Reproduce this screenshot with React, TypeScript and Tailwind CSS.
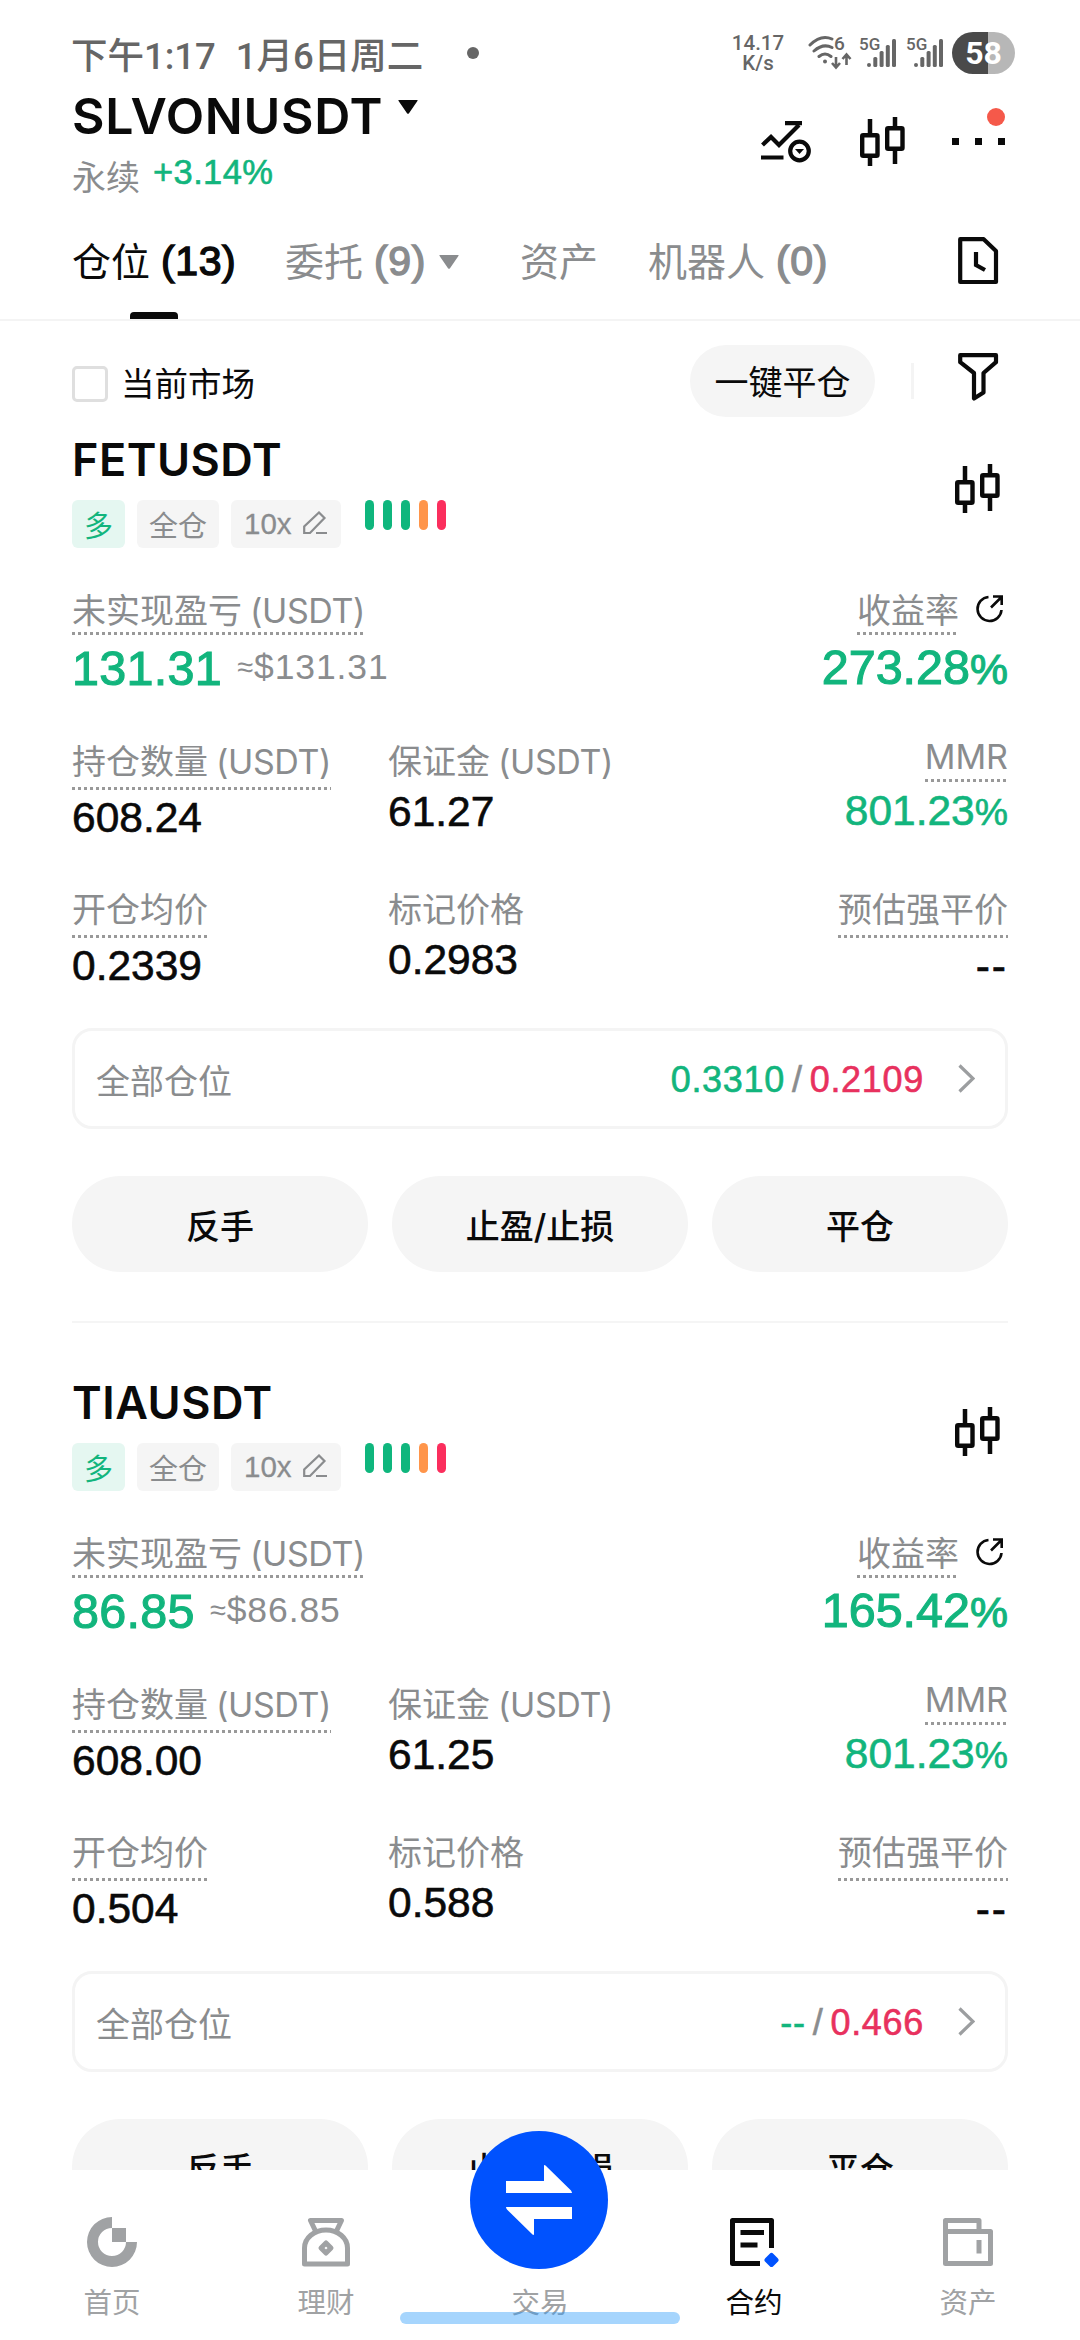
import React from "react";
import clsx from "clsx";

// figures sit between regular and bold, the thin stroke gives the extra weight
const NUM = "font-['Liberation_Sans','Noto_Sans_CJK_SC',sans-serif] [-webkit-text-stroke:0.6px_currentColor]";

const CandleIcon = () => (
	<svg width="45" height="50" viewBox="0 0 45 50" fill="none" stroke="#0a0a0a">
		<path d="M10 2v15M10 40v9M35 0v11M35 33v14" strokeWidth="4.5" />
		<rect x="2.2" y="18.2" width="15.3" height="20.6" rx="1" strokeWidth="4.4" />
		<rect x="27.2" y="11.2" width="15.3" height="20.6" rx="1" strokeWidth="4.4" />
	</svg>
);

const Caret = ({ className }: { className?: string }) => (
	<svg width="20" height="14" viewBox="0 0 20 14" fill="currentColor" className={className}>
		<path d="M1 0h18q1.200 0 .4 1L11 13.300q-1 1-2 0L.6 1Q-.2 0 1 0z" />
	</svg>
);

const Signal = () => (
	<div className="relative w-[38px] h-[36px]">
		<span className="absolute left-0 top-0 text-[17px] leading-[18px] font-medium">5G</span>
		<svg width="30" height="30" viewBox="0 0 30 30" fill="#666" className="absolute left-[8px] top-[4px]">
			<rect x="0" y="24" width="4" height="4" rx="2" />
			<rect x="6.300" y="18" width="4" height="10" rx="1.500" />
			<rect x="12.600" y="12" width="4" height="16" rx="1.500" />
			<rect x="18.800" y="6" width="4" height="22" rx="1.500" />
			<rect x="25" y="0" width="4" height="28" rx="1.500" />
		</svg>
	</div>
);

const StatusBar = () => (
	<div className="flex items-center h-[86px] pt-5 pl-[71px] pr-[65px] text-[#666] font-['Roboto','Noto_Sans_CJK_SC',sans-serif]">
		<span className="mt-[8px] text-[36.500px] leading-[42px] font-medium">下午1:17</span>
		<span className="mt-[8px] ml-[20px] text-[36.500px] leading-[42px] font-medium">1月6日周二</span>
		<span className="ml-[44px] size-3 rounded-full bg-[#666]" />
		<div className="flex items-center ml-auto">
			<div className="w-[54px] text-center text-[20.500px] leading-[20px] font-medium">
				<div>14.17</div>
				<div>K/s</div>
			</div>
			<div className="relative w-[44px] h-[36px] ml-[23px]">
				<svg width="44" height="36" viewBox="0 0 44 36" fill="none" stroke="#666" strokeWidth="3" strokeLinecap="round">
					<path d="M2 10Q13-1 24 4M6 16Q15 8 24 12.500M11 21.500q6-5 12 0" />
					<circle cx="17" cy="26.500" r="2" fill="#666" stroke="none" />
					<path d="M28 22v10m-4-4l4 4.500 4-4.500M38.500 30V20m-4 4l4-4.500 4 4.500" strokeWidth="2.600" strokeLinecap="butt" />
				</svg>
				<span className="absolute left-[26px] top-[-1px] text-[19px] leading-[20px] font-medium">6</span>
			</div>
			<div className="flex gap-[9px] ml-[7px]">
				<Signal />
				<Signal />
			</div>
			<div className="flex items-center justify-center w-[63px] h-[42px] ml-[8px] rounded-full bg-[linear-gradient(90deg,#4a4a4a_36px,#b7b7b7_36px)] text-white text-[32px] leading-[42px] font-bold">
				58
			</div>
		</div>
	</div>
);

const Header = () => (
	<div className="flex justify-between h-[122px] pl-[72px] pr-[75px]">
		<div>
			<div className="flex items-start">
				<h1 className="text-[50px] leading-[60px] font-semibold tracking-[0.700px]">SLVONUSDT</h1>
				<Caret className="mt-[14px] ml-[15px]" />
			</div>
			<div className="flex items-center h-[62px] text-[34px]">
				<span className="text-[#8a8c8e]">永续</span>
				<span className={clsx(NUM, "ml-[13px] mb-[10px] text-[34.500px] leading-[40px] tracking-[0.400px] text-[#12b57d]")}>+3.14%</span>
			</div>
		</div>
		<div className="flex items-center h-[111px]">
			<svg width="50" height="42" viewBox="0 0 50 42" fill="none" stroke="#0a0a0a" strokeWidth="4.200" className="mr-[49px]">
				<path d="M1.500 24L10 16l8 8L38 4M24 2.200h17M0 36.500h22.500" />
				<circle cx="38.500" cy="30" r="9.300" />
				<path d="M34 28h9l-4.500 5z" fill="#0a0a0a" stroke="none" />
			</svg>
			<CandleIcon />
			<div className="relative flex items-center justify-between w-[53px] ml-[47px]">
				<span className="size-[7px] bg-[#0a0a0a]" />
				<span className="size-[7px] bg-[#0a0a0a]" />
				<span className="size-[7px] bg-[#0a0a0a]" />
				<span className="absolute right-0 -top-[30px] size-[18px] rounded-full bg-[#f5594a]" />
			</div>
		</div>
	</div>
);

type TabProps = {
	label: string;
	count?: string;
	active?: boolean;
	caret?: boolean;
	className?: string;
};

const Tab = ({ label, count, active, caret, className }: TabProps) => (
	<div className={clsx("flex text-[41px] leading-[107px]", active ? "text-[#0a0a0a]" : "text-[#8a8c8e]", className)}>
		<div className="relative flex">
			<span className="text-[39px]">{label}</span>
			{count && (
				<span className="ml-[11px] tracking-[0.600px] font-['Liberation_Sans',sans-serif] [-webkit-text-stroke:1.400px_currentColor]">{count}</span>
			)}
			{active && (
				<span className="absolute bottom-0 left-1/2 -translate-x-1/2 w-12 h-[7px] rounded-t bg-[#0a0a0a]" />
			)}
		</div>
		{caret && <Caret className="mt-[47px] ml-[13px]" />}
	</div>
);

const Tabs = () => (
	<div className="flex h-[113px] pl-[72px] border-b-2 border-[#f4f4f4]">
		<Tab label="仓位" count="(13)" active className="w-[213px]" />
		<Tab label="委托" count="(9)" caret className="w-[235px]" />
		<Tab label="资产" className="w-[128px]" />
		<Tab label="机器人" count="(0)" />
		<svg width="41" height="48" viewBox="0 0 41 48" fill="none" stroke="#0a0a0a" strokeWidth="4.200" className="ml-auto mr-[81px] mt-[29px]">
			<path d="M2.200 2.200h23.500L38 14v31H2.200z" strokeLinejoin="round" />
			<path d="M18 15v13l9 5" />
		</svg>
	</div>
);

const FilterRow = () => (
	<div className="flex items-center h-[120px] pl-[72px] pr-[81px]">
		<span className="mt-[6px] size-9 rounded-[5px] border-[3px] border-[#dfdfdf]" />
		<span className="mt-[6px] ml-[13px] text-[33.500px] leading-[40px]">当前市场</span>
		<button className="ml-auto w-[185px] h-[72px] rounded-full bg-[#f5f5f5] text-[34px] leading-[76px]">一键平仓</button>
		<span className="ml-[36px] w-[3px] h-[36px] bg-[#f4f4f4]" />
		<svg width="41" height="48" viewBox="0 0 41 48" fill="none" stroke="#0a0a0a" strokeWidth="4.200" strokeLinejoin="round" className="ml-[44px] mb-[8px]">
			<path d="M2.200 2.200H38v7L25.500 20v19.500l-9.500 6V20L2.200 9.200z" />
		</svg>
	</div>
);

const Dotted = () => (
	<div className="h-[3px] bg-[repeating-linear-gradient(90deg,#999_0_3px,transparent_3px_6px)]" />
);

const Percent = ({ value }: { value: string }) => (
	<>
		{value}
		<span className="text-[0.880em]">%</span>
	</>
);

const Label = ({ text, unit }: { text: string; unit?: string }) => (
	<span className="flex translate-y-px text-[34px] text-[#8a8c8e]">
		{text}
		{unit && <span className="ml-[8px] tracking-[-0.400px]">{unit}</span>}
	</span>
);

type PositionData = {
	symbol: string;
	pnl: string;
	roi: string;
	size: string;
	margin: string;
	mmr: string;
	entry: string;
	mark: string;
	tp: string;
	sl: string;
};

const Position = ({ data }: { data: PositionData }) => (
	<div className="px-[72px]">
		<div className="flex justify-between h-[107px]">
			<div>
				<h2 className="text-[45px] leading-[38px] font-semibold tracking-[0.500px]">{data.symbol}</h2>
				<div className="flex mt-[21px] text-[29px] leading-[53px] text-[#8a8c8e]">
					<span className="w-[53px] h-12 rounded-[6px] text-center bg-[#e5f7f1] text-[#12b57d]">多</span>
					<span className="w-[82px] h-12 ml-3 rounded-[6px] text-center bg-[#f5f5f5]">全仓</span>
					<div className="flex w-[110px] h-12 ml-3 pl-[13px] rounded-[6px] bg-[#f5f5f5]">
						<span className="w-[49px] text-[29.500px] leading-[48px] font-['Liberation_Sans',sans-serif] [-webkit-text-stroke:0.3px_currentColor]">10x</span>
						<svg width="25" height="24" viewBox="0 0 25 24" fill="none" stroke="#8a8c8e" strokeWidth="2.200" className="mt-[11px] ml-[10px]">
							<path d="M1.200 22v-6.500L16 1.500l5.500 5.500L7 22zM13 22h11" />
						</svg>
					</div>
					<div className="flex gap-[9px] ml-6">
						<span className="w-[9px] h-[30px] rounded-full bg-[#0fb67d]" />
						<span className="w-[9px] h-[30px] rounded-full bg-[#0fb67d]" />
						<span className="w-[9px] h-[30px] rounded-full bg-[#0fb67d]" />
						<span className="w-[9px] h-[30px] rounded-full bg-[#ff954a]" />
						<span className="w-[9px] h-[30px] rounded-full bg-[#fb2e5d]" />
					</div>
				</div>
			</div>
			<div className="mt-[23px] mr-2">
				<CandleIcon />
			</div>
		</div>

		{/* pnl */}
		<div className="flex justify-between mt-10">
			<div className="flex flex-col items-start">
				<div className="leading-[44px]">
					<Label text="未实现盈亏" unit="(USDT)" />
					<Dotted />
				</div>
				<div className={clsx(NUM, "flex items-center h-[66px] text-[#12b57d]")}>
					<span className="text-[48.500px] leading-[64px] tracking-[0.300px] [-webkit-text-stroke:1.100px_currentColor]">{data.pnl}</span>
					<span className="flex items-center ml-[15px] text-[35.500px] text-[#8a8c8e] tracking-[0.900px] [-webkit-text-stroke:0]">
						<span className="text-[29px]">≈</span>${data.pnl}
					</span>
				</div>
			</div>
			<div className="flex flex-col items-end">
				<div className="flex items-start leading-[44px]">
					<div>
						<Label text="收益率" />
						<Dotted />
					</div>
					<svg width="27" height="28" viewBox="0 0 27 28" fill="none" stroke="#0a0a0a" strokeWidth="2.600" className="mt-[7px] ml-[17px] mr-[5px]">
						<path d="M12.500 2A12 12 0 1 0 25.500 15M15 12.500L25 2.500M17 1.500h8.700V10" />
					</svg>
				</div>
				<div className={clsx(NUM, "h-[66px] text-[48.500px] leading-[64px] text-[#12b57d] [-webkit-text-stroke:1.100px_currentColor]")}>
					<Percent value={data.roi} />
				</div>
			</div>
		</div>

		<div className="grid grid-cols-[316px_1fr_auto] grid-rows-[148px_145px] mt-[34px] text-[42.500px] leading-[52px]">
			<div className="flex flex-col items-start">
				<div>
					<Label text="持仓数量" unit="(USDT)" />
					<Dotted />
				</div>
				<span className={clsx(NUM, "leading-[56px]")}>{data.size}</span>
			</div>
			<div>
				<Label text="保证金" unit="(USDT)" />
				<div className={clsx(NUM, "leading-[50px]")}>{data.margin}</div>
			</div>
			<div className="flex flex-col items-end">
				<div className="leading-[42px]">
					<Label text="MMR" />
					<div className="mt-[2px]">
						<Dotted />
					</div>
				</div>
				<span className={clsx(NUM, "leading-[57px] text-[#12b57d]")}>
					<Percent value={data.mmr} />
				</span>
			</div>
			<div className="flex flex-col items-start">
				<div>
					<Label text="开仓均价" />
					<Dotted />
				</div>
				<span className={clsx(NUM, "leading-[56px]")}>{data.entry}</span>
			</div>
			<div>
				<Label text="标记价格" />
				<div className={clsx(NUM, "leading-[50px]")}>{data.mark}</div>
			</div>
			<div className="flex flex-col items-end">
				<div>
					<Label text="预估强平价" />
					<Dotted />
				</div>
				<span className={clsx(NUM, "leading-[57px] tracking-[2px]")}>--</span>
			</div>
		</div>

		<div className="flex items-center h-[101px] pl-[21px] pr-[30px] rounded-[20px] border-[3px] border-[#f4f4f4]">
			<span className="mt-[7px] text-[34px] leading-[40px] text-[#8a8c8e]">全部仓位</span>
			<div className={clsx(NUM, "flex gap-[7px] ml-auto mt-[2px] text-[36px] leading-[40px] tracking-[0.700px]")}>
				<span className="text-[#12b57d]">{data.tp}</span>
				<span className="text-[#8a8c8e]">/</span>
				<span className="text-[#e8315e]">{data.sl}</span>
			</div>
			<svg width="17" height="29" viewBox="0 0 17 29" fill="none" stroke="#9c9ea0" strokeWidth="3.200" className="ml-[34px]">
				<path d="M1.500 1.500L15 14.500 1.500 27.500" />
			</svg>
		</div>

		<div className="grid grid-cols-3 gap-6 mt-[47px] text-[34px] leading-[102px] font-medium">
			<button className="h-24 rounded-full bg-[#f5f5f5]">反手</button>
			<button className="h-24 rounded-full bg-[#f5f5f5]">止盈/止损</button>
			<button className="h-24 rounded-full bg-[#f5f5f5]">平仓</button>
		</div>
		<div className="h-[2px] mt-[49px] mb-[61px] bg-[#f5f5f5]" />
	</div>
);

const NavItem = ({ label, active, children }: { label: string; active?: boolean; children?: React.ReactNode }) => (
	<div className={clsx("flex flex-1 flex-col items-center pt-[47px] text-[28.500px] leading-[36px]", active ? "text-[#0a0a0a]" : "text-[#a0a2a4]")}>
		<div className="h-[50px]">{children}</div>
		<span className="mt-[18px]">{label}</span>
	</div>
);

const BottomNav = () => (
	<div className="relative flex h-[170px] px-[5px] bg-white">
		<NavItem label="首页">
			<svg width="50" height="50" viewBox="0 0 50 50" fill="#a0a2a4">
				<path d="M25 0A25 25 0 1 0 50 25H39A14 14 0 1 1 25 11z" />
				<path d="M25 11h14v14H25z" />
			</svg>
		</NavItem>
		<NavItem label="理财">
			<svg width="48" height="50" viewBox="0 0 48 50" fill="none" stroke="#a0a2a4" strokeWidth="5" strokeLinejoin="round">
				<path d="M2.500 47V31a21.500 18 0 0 1 43 0V47z" />
				<path d="M14 15L8.500 3.500h31L34 15" />
				<path d="M24 26l5 5-5 5-5-5z" />
			</svg>
		</NavItem>
		<NavItem label="交易" />
		<NavItem label="合约" active>
			<svg width="50" height="50" viewBox="0 0 50 50" fill="none" stroke="#0a0a0a" strokeWidth="5">
				<path d="M42.500 31V3.500h-39v43H31" strokeLinejoin="round" />
				<path d="M11.500 15.500h23.500M11.500 28h17" />
				<path d="M42.500 38.500l4.500 4.500-4.500 4.500-4.500-4.500z" fill="#0052fe" stroke="#0052fe" strokeLinejoin="round" />
			</svg>
		</NavItem>
		<NavItem label="资产">
			<svg width="50" height="50" viewBox="0 0 50 50" fill="none" stroke="#a0a2a4" strokeWidth="5" strokeLinejoin="round">
				<path d="M2.500 14.500H47.500v32h-45V3.500H36v11" />
				<path d="M36 23v13.500" />
			</svg>
		</NavItem>
		<div className="absolute left-[470px] -top-[39px] flex items-center justify-center size-[138px] rounded-full bg-[#0052fe]">
			<svg width="66" height="70" viewBox="0 0 66 70" fill="#fff">
				<path d="M0 16h38V1q0-1.500 1.500-.5L65 25.500q1 1.500 1 2.500H0z" />
				<path d="M66 54H28v15q0 1.500-1.500.5L1 44.500Q0 43 0 42h66z" />
			</svg>
		</div>
		<div className="absolute left-[400px] bottom-4 w-[280px] h-3 rounded-full bg-[#2196fa]/40" />
	</div>
);

const positions: PositionData[] = [
	{
		symbol: "FETUSDT",
		pnl: "131.31",
		roi: "273.28",
		size: "608.24",
		margin: "61.27",
		mmr: "801.23",
		entry: "0.2339",
		mark: "0.2983",
		tp: "0.3310",
		sl: "0.2109",
	},
	{
		symbol: "TIAUSDT",
		pnl: "86.85",
		roi: "165.42",
		size: "608.00",
		margin: "61.25",
		mmr: "801.23",
		entry: "0.504",
		mark: "0.588",
		tp: "--",
		sl: "0.466",
	},
];

const App = () => {
	return (
		<div className="flex flex-col w-[1080px] h-[2340px] overflow-hidden bg-white text-[#0a0a0a] font-['Inter','Noto_Sans_CJK_SC',sans-serif]">
			<StatusBar />
			<Header />
			<Tabs />
			<div className="flex-1 min-h-0 overflow-hidden">
				<FilterRow />
				{positions.map((item) => (
					<Position key={item.symbol} data={item} />
				))}
			</div>
			<BottomNav />
		</div>
	);
};

export default App;
